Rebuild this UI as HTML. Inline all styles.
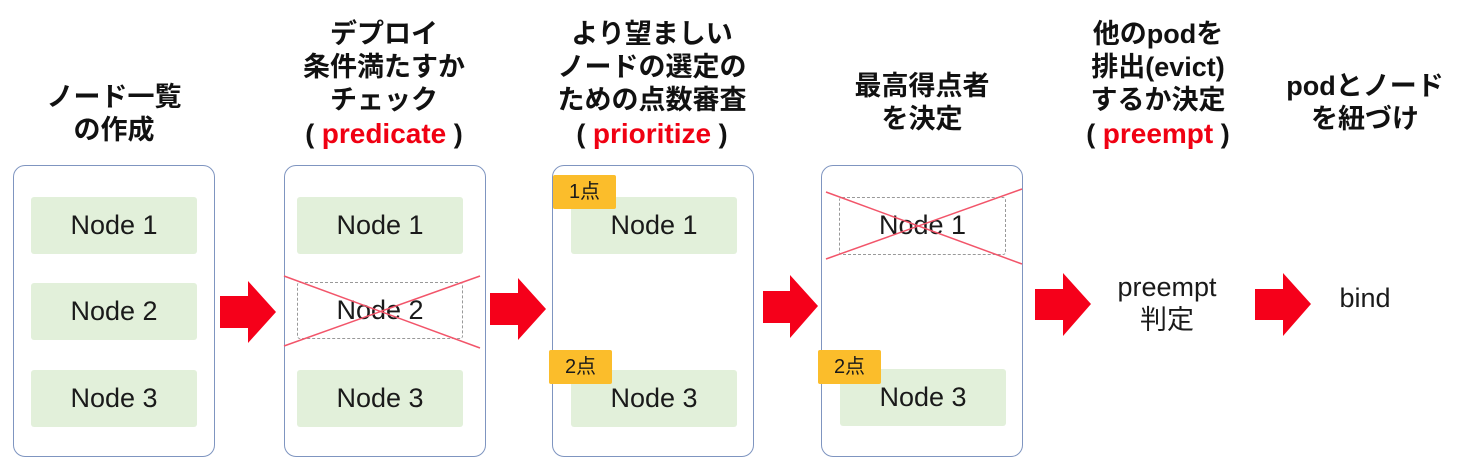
<!DOCTYPE html>
<html><head><meta charset="utf-8"><style>
body{margin:0;width:1459px;height:471px;background:#fff;position:relative;overflow:hidden;font-family:"Liberation Sans","Noto Sans CJK JP",sans-serif;color:#1a1a1a}
.h{position:absolute;width:300px;text-align:center;font-weight:bold;font-size:27px;line-height:33px;color:#111}
.h b{color:#f00012;font-size:28px}
.box{position:absolute;top:165px;width:202px;height:292px;border:1.5px solid #7f95c0;border-radius:12px;box-sizing:border-box}
.n{position:absolute;width:166px;height:57px;background:#e2f0da;border-radius:3px;font-size:27px;line-height:57px;text-align:center}
.d{background:none;border:1.5px dashed #999;box-sizing:border-box;line-height:54px}
.bd{position:absolute;width:63px;height:34px;background:#fbbd2b;font-size:20px;line-height:34px;text-align:center;border-radius:2px}
.t{position:absolute;font-size:27px;text-align:center;width:200px;line-height:33px}
</style></head><body>
<div class="h" style="left:-36px;top:81px">ノード一覧<br>の作成</div>
<div class="h" style="left:234px;top:18px">デプロイ<br>条件満たすか<br>チェック<br>( <b>predicate</b> )</div>
<div class="h" style="left:502px;top:18px">より望ましい<br>ノードの選定の<br>ための点数審査<br>( <b>prioritize</b> )</div>
<div class="h" style="left:772px;top:70px">最高得点者<br>を決定</div>
<div class="h" style="left:1008px;top:18px">他のpodを<br>排出(evict)<br>するか決定<br>( <b>preempt</b> )</div>
<div class="h" style="left:1215px;top:70px">podとノード<br>を紐づけ</div>

<div class="box" style="left:13px"></div>
<div class="n" style="left:31px;top:197px">Node 1</div>
<div class="n" style="left:31px;top:283px">Node 2</div>
<div class="n" style="left:31px;top:370px">Node 3</div>

<div class="box" style="left:284px"></div>
<div class="n" style="left:297px;top:197px">Node 1</div>
<div class="n d" style="left:297px;top:282px">Node 2</div>
<div class="n" style="left:297px;top:370px">Node 3</div>

<div class="box" style="left:552px"></div>
<div class="n" style="left:571px;top:197px">Node 1</div>
<div class="n" style="left:571px;top:370px">Node 3</div>
<div class="bd" style="left:553px;top:175px">1点</div>
<div class="bd" style="left:549px;top:350px">2点</div>

<div class="box" style="left:821px"></div>
<div class="n d" style="left:839px;top:197px;width:167px;height:58px">Node 1</div>
<div class="n" style="left:840px;top:369px">Node 3</div>
<div class="bd" style="left:818px;top:350px">2点</div>

<div class="t" style="left:1067px;top:271px">preempt<br>判定</div>
<div class="t" style="left:1265px;top:282px">bind</div>

<svg width="1459" height="471" style="position:absolute;left:0;top:0">
<g stroke="#f2556a" stroke-width="1.5">
<line x1="284" y1="276" x2="480" y2="348"/><line x1="284" y1="346" x2="480" y2="276"/>
<line x1="826" y1="192" x2="1022" y2="264"/><line x1="826" y1="259" x2="1022" y2="189"/>
</g>
<g fill="#f5001a">
<polygon points="220,296 248,296 248,281 276,312 248,343 248,328 220,328"/>
<polygon points="490,293 518,293 518,278 546,309 518,340 518,325 490,325"/>
<polygon points="763,291 790,291 790,275 818,306 790,338 790,323 763,323"/>
<polygon points="1035,289 1063,289 1063,273 1091,304 1063,336 1063,320 1035,320"/>
<polygon points="1255,289 1283,289 1283,273 1311,304 1283,336 1283,320 1255,320"/>
</g>
</svg>
</body></html>
